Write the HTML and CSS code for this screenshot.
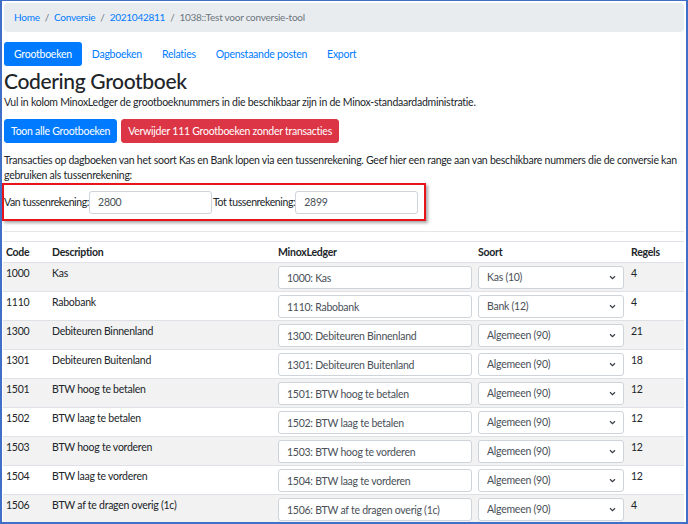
FILE: index.html
```html
<!DOCTYPE html>
<html lang="nl">
<head>
<meta charset="utf-8">
<title>Codering Grootboek</title>
<link rel="stylesheet" href="styles.css">
</head>
<body>
<div class="frame">
  <nav class="breadcrumb">
    <a href="#">Home</a><span class="sep">/</span><a href="#">Conversie</a><span class="sep">/</span><a href="#">2021042811</a><span class="sep">/</span><span class="current">1038::Test voor conversie-tool</span>
  </nav>
  <ul class="pills">
    <li><a class="pill active" href="#">Grootboeken</a></li>
    <li><a class="pill" href="#">Dagboeken</a></li>
    <li><a class="pill" href="#">Relaties</a></li>
    <li><a class="pill" href="#">Openstaande posten</a></li>
    <li><a class="pill" href="#">Export</a></li>
  </ul>
  <h1 class="title">Codering Grootboek</h1>
  <p class="lead">Vul in kolom MinoxLedger de grootboeknummers in die beschikbaar zijn in de Minox-standaardadministratie.</p>
  <div class="actions">
    <button class="btn btn-primary">Toon alle Grootboeken</button>
    <button class="btn btn-danger">Verwijder 111 Grootboeken zonder transacties</button>
  </div>
  <p class="info">Transacties op dagboeken van het soort Kas en Bank lopen via een tussenrekening. Geef hier een range aan van beschikbare nummers die de conversie kan gebruiken als tussenrekening:</p>
  <div class="range">
    <label class="lbl">Van tussenrekening:</label><input class="field range-input" value="2800">
    <label class="lbl">Tot tussenrekening:</label><input class="field range-input" value="2899">
  </div>
  <hr class="divider">
  <table class="grid">
    <colgroup>
      <col class="c-code"><col class="c-desc"><col class="c-minox"><col class="c-soort"><col class="c-regels">
    </colgroup>
    <thead>
      <tr><th>Code</th><th>Description</th><th>MinoxLedger</th><th>Soort</th><th>Regels</th></tr>
    </thead>
    <tbody>
      <tr><td>1000</td><td>Kas</td><td><input class="field" value="1000: Kas"></td><td><select class="field sel"><option>Kas (10)</option></select></td><td>4</td></tr>
      <tr><td>1110</td><td>Rabobank</td><td><input class="field" value="1110: Rabobank"></td><td><select class="field sel"><option>Bank (12)</option></select></td><td>4</td></tr>
      <tr><td>1300</td><td>Debiteuren Binnenland</td><td><input class="field" value="1300: Debiteuren Binnenland"></td><td><select class="field sel"><option>Algemeen (90)</option></select></td><td>21</td></tr>
      <tr><td>1301</td><td>Debiteuren Buitenland</td><td><input class="field" value="1301: Debiteuren Buitenland"></td><td><select class="field sel"><option>Algemeen (90)</option></select></td><td>18</td></tr>
      <tr><td>1501</td><td>BTW hoog te betalen</td><td><input class="field" value="1501: BTW hoog te betalen"></td><td><select class="field sel"><option>Algemeen (90)</option></select></td><td>12</td></tr>
      <tr><td>1502</td><td>BTW laag te betalen</td><td><input class="field" value="1502: BTW laag te betalen"></td><td><select class="field sel"><option>Algemeen (90)</option></select></td><td>12</td></tr>
      <tr><td>1503</td><td>BTW hoog te vorderen</td><td><input class="field" value="1503: BTW hoog te vorderen"></td><td><select class="field sel"><option>Algemeen (90)</option></select></td><td>12</td></tr>
      <tr><td>1504</td><td>BTW laag te vorderen</td><td><input class="field" value="1504: BTW laag te vorderen"></td><td><select class="field sel"><option>Algemeen (90)</option></select></td><td>12</td></tr>
      <tr><td>1506</td><td>BTW af te dragen overig (1c)</td><td><input class="field" value="1506: BTW af te dragen overig (1c)"></td><td><select class="field sel"><option>Algemeen (90)</option></select></td><td>4</td></tr>
    </tbody>
  </table>
</div>
</body>
</html>
```
FILE: styles.css
```css
* { box-sizing: border-box; }
html, body { margin: 0; padding: 0; background: #fff; }
body {
  font-family: Lato, "Open Sans", sans-serif;
  font-size: 10.5px;
  letter-spacing: -0.25px;
  color: #212529;
}
.frame {
  width: 688px;
  height: 524px;
  overflow: hidden;
  border: 2px solid #3f6fc6;
  border-top-width: 1px;
  padding: 2px 2px 0 2px;
}
a { color: #007bff; text-decoration: none; }

.breadcrumb {
  height: 29px;
  line-height: 29px;
  background: #e9ecef;
  border-radius: 4px;
  padding: 0 10px;
  color: #6c757d;
  font-size: 10px;
  letter-spacing: -0.25px;
}
.breadcrumb .sep { padding: 0 5px; color: #6c757d; }
.breadcrumb .current { color: #6c757d; }

.pills {
  list-style: none;
  margin: 10px 0 0 0;
  padding: 0;
  display: flex;
}
.pill {
  display: block;
  height: 24px;
  line-height: 24px;
  padding: 0 10px;
  border-radius: 3px;
}
.pill.active { background: #007bff; color: #fff; }

.title {
  margin: 0;
  font-size: 21px;
  letter-spacing: -0.35px;
  font-weight: 500;
  line-height: 29px;
}
.lead { margin: 0; line-height: 15px; }

.actions { display: flex; gap: 4px; margin-top: 9px; }
.btn {
  font: inherit;
  letter-spacing: inherit;
  height: 24px;
  padding: 0 6px;
  border: 1px solid transparent;
  border-radius: 3px;
  color: #fff;
}
.btn-primary { background: #007bff; border-color: #007bff; }
.btn-danger { background: #dc3545; border-color: #dc3545; }

.info { margin: 10px 0 0 0; line-height: 15px; }

.range {
  margin-left: -2px;
  width: 424px;
  height: 38px;
  border: 2px solid #e8141b;
  box-shadow: 2px 2px 3px rgba(0,0,0,0.35);
  display: flex;
  align-items: center;
  padding: 0;
}
.lbl { white-space: nowrap; letter-spacing: -0.38px; }
.field {
  font: inherit;
  letter-spacing: inherit;
  color: #495057;
  background: #fff;
  border: 1px solid #ced4da;
  border-radius: 3px;
  height: 23px;
  padding: 0 8px;
}
.range-input { width: 123px; margin-right: 1px; letter-spacing: -0.25px; }

.divider {
  border: 0;
  border-top: 1px solid #e6e6e6;
  margin: 10px 0 0 0;
}

.grid {
  margin-top: 9px;
  margin-left: -1px;
  width: 681px;
  border-collapse: collapse;
  table-layout: fixed;
}
.c-code { width: 46px; }
.c-desc { width: 226px; }
.c-minox { width: 200px; }
.c-soort { width: 153px; }
.c-regels { width: 56px; }
.grid th, .grid td {
  padding: 3px 3px 2px 3px;
  text-align: left;
  vertical-align: top;
  line-height: 15px;
  border-top: 1px solid #dee2e6;
}
.grid th { font-weight: 700; }
.grid tbody tr:nth-child(odd) { background: #f2f2f2; }
.grid td .field { width: 100%; display: block; }
.grid td:nth-child(3) .field { width: 194px; }
.grid td:nth-child(4) .field { width: 146px; }
.sel {
  appearance: none;
  -webkit-appearance: none;
  background-image: url("data:image/svg+xml,%3Csvg xmlns='http://www.w3.org/2000/svg' width='8' height='6' viewBox='0 0 8 6'%3E%3Cpath d='M1 1.5 L4 4.5 L7 1.5' fill='none' stroke='%23343a40' stroke-width='1.4'/%3E%3C/svg%3E");
  background-repeat: no-repeat;
  background-position: right 7px center;
  background-size: 7px 5px;
}
```
